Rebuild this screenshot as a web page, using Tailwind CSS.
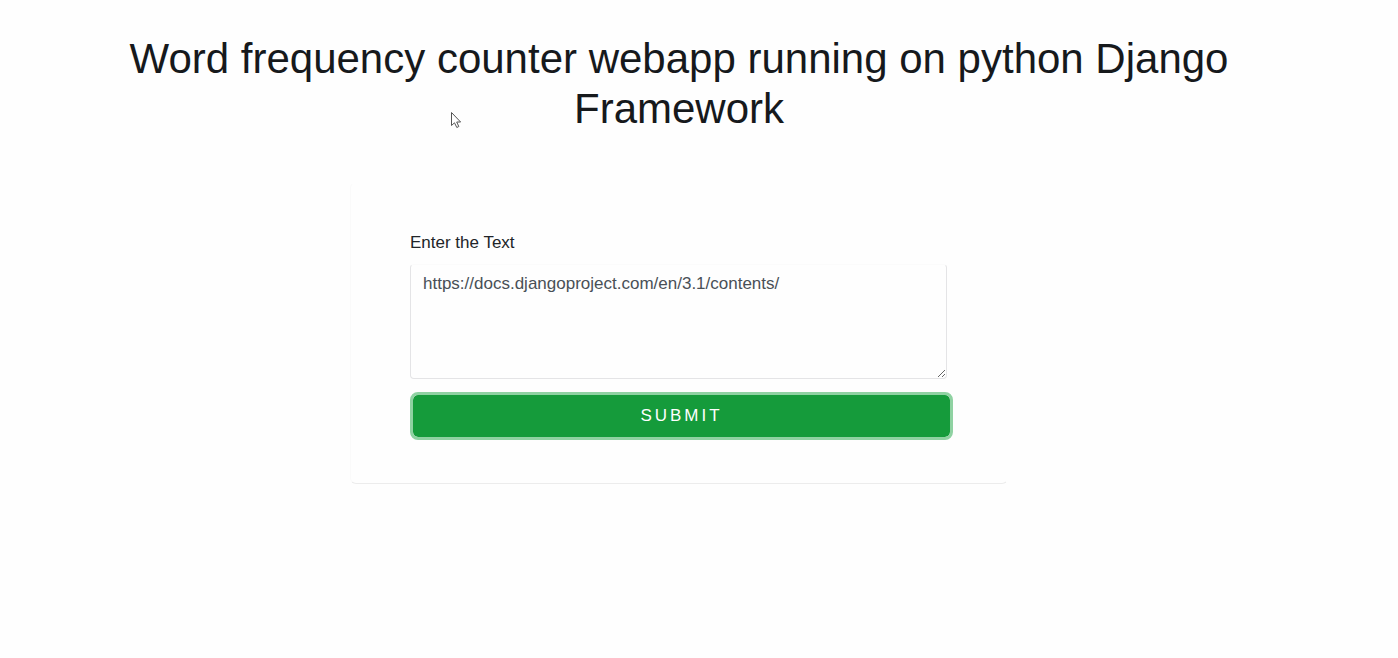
<!DOCTYPE html>
<html lang="en">
<head>
<meta charset="utf-8">
<meta name="viewport" content="width=device-width, initial-scale=1">
<title>Word frequency counter</title>
<script src="https://cdn.jsdelivr.net/npm/@tailwindcss/browser@4"></script>
</head>
<body class="min-h-screen bg-[#fefefe] font-['Liberation_Sans',Arial,sans-serif] text-[#16191c]">
<main class="flex flex-col items-center pt-[34px] pr-10">
  <h1 class="w-full max-w-[1158px] text-center text-[42px] leading-[50px]">Word frequency counter webapp running on python Django Framework</h1>
  <form class="mt-12 w-full max-w-[658px] rounded-md border border-t-transparent border-r-transparent border-b-[#ececec] border-l-[#fafafa] pt-[47px] pr-[54px] pb-[43px] pl-[59px]">
    <label for="text" class="block text-[17px] leading-[25px] text-[#212529]">Enter the Text</label>
    <div class="mt-[9px] flex pr-[6px]">
      <textarea id="text" name="text" spellcheck="false" class="h-[115px] w-full resize rounded border border-[#e4e4e6] border-t-[#fbfbfb] px-3 py-[6px] text-[17px] leading-[25px] text-[#495057]">https://docs.djangoproject.com/en/3.1/contents/</textarea>
    </div>
    <button type="button" class="mt-[13px] block h-12 w-full rounded-lg border-[3px] border-[#8fd2a2] bg-[#159b3b] bg-clip-padding text-[17px] tracking-[3px] text-white">SUBMIT</button>
  </form>
</main>
<svg class="absolute top-[111px] left-[450px] h-[18px] w-3" viewBox="0 0 12 18" fill="#fff" stroke="#555" stroke-width="1" aria-hidden="true">
  <path d="M1.5 1.5V14.5L4.5 11.8L6.8 16.5L8.8 15.5L6.7 11H10.6Z"/>
</svg>
</body>
</html>
